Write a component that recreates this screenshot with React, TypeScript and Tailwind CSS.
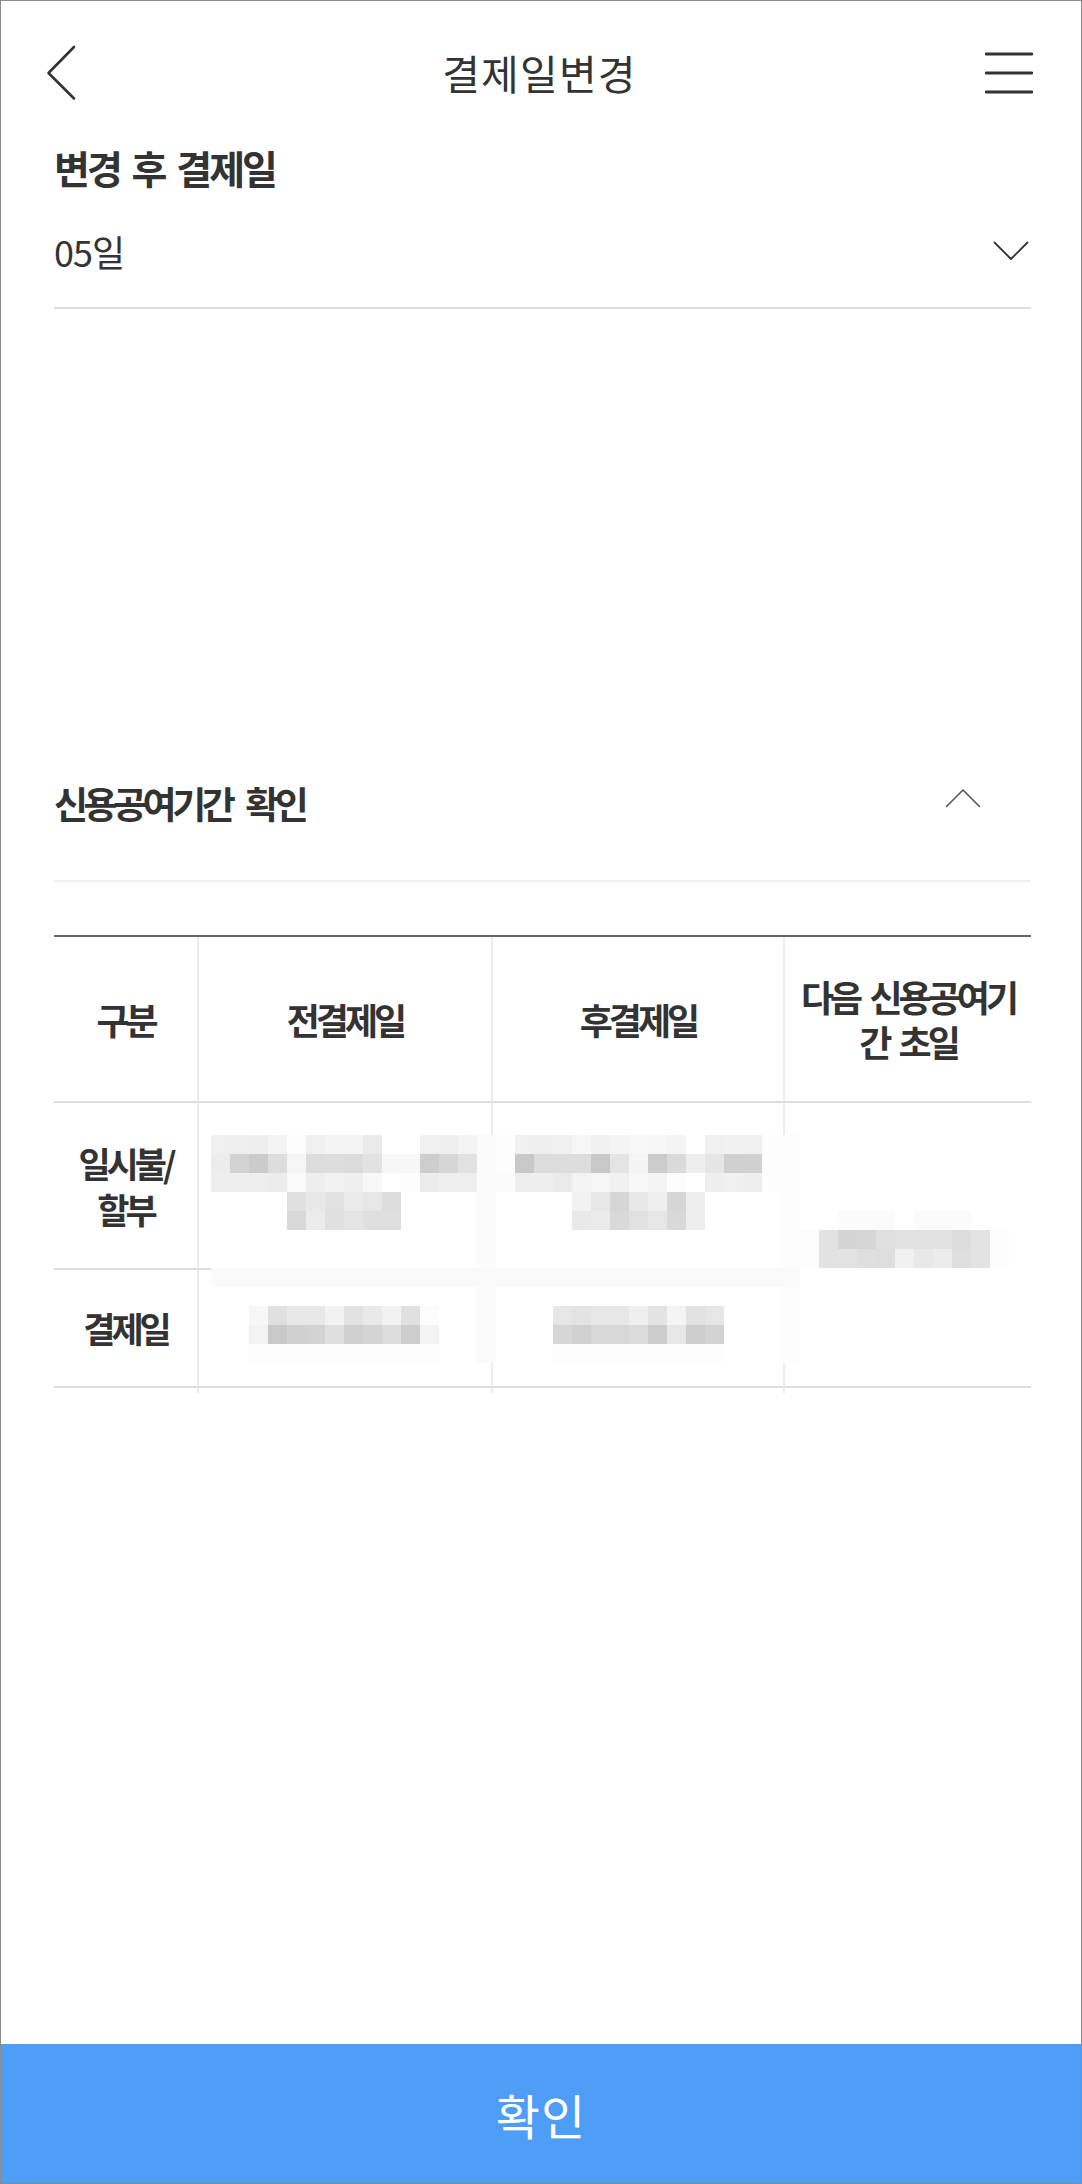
import React from "react";

const FONT = "font-['Noto_Sans_CJK_KR','Noto_Sans',sans-serif]";

const COLS = 42;
const ROWS = 12;

function buildMosaic(): number[][] {
  const g: number[][] = Array.from({ length: ROWS }, () => Array(COLS).fill(0xff));
  const put = (r: number, c: number, vals: number[]) => {
    vals.forEach((v, i) => {
      g[r][c + i] = v;
    });
  };
  // row 1 (일시불/할부) — 전결제일 / 후결제일
  put(0, 0, [0xf0, 0xef, 0xee, 0xf3, 0xfd, 0xf0, 0xf4, 0xf4, 0xea, 0xff, 0xff, 0xf0, 0xef, 0xf4, 0xfc]);
  put(0, 15, [0xfd, 0xf0, 0xef, 0xf0, 0xf6, 0xf1, 0xf3, 0xf8, 0xf7, 0xf4, 0xff, 0xf0, 0xf1, 0xf0, 0xfd]);
  put(1, 0, [0xec, 0xd2, 0xcb, 0xdd, 0xf5, 0xdc, 0xdd, 0xdb, 0xe2, 0xf7, 0xf7, 0xcd, 0xd6, 0xe2, 0xfc]);
  put(1, 15, [0xfd, 0xc8, 0xdc, 0xdd, 0xdd, 0xc8, 0xe4, 0xf4, 0xcc, 0xda, 0xee, 0xe5, 0xd0, 0xd0, 0xfd]);
  put(2, 0, [0xee, 0xee, 0xee, 0xec, 0xfa, 0xee, 0xf2, 0xef, 0xf8, 0xff, 0xfd, 0xec, 0xef, 0xef, 0xfd]);
  put(2, 15, [0xfa, 0xee, 0xee, 0xea, 0xf3, 0xf5, 0xf0, 0xf8, 0xf4, 0xfc, 0xff, 0xee, 0xf0, 0xee, 0xfd]);
  put(3, 4, [0xe0, 0xe8, 0xe1, 0xea, 0xe6, 0xdc]);
  put(3, 19, [0xf2, 0xe6, 0xd6, 0xe7, 0xef, 0xd6, 0xee]);
  put(4, 4, [0xd8, 0xeb, 0xe0, 0xe4, 0xdf, 0xdf]);
  put(4, 19, [0xe9, 0xea, 0xd9, 0xe1, 0xe6, 0xd9, 0xee]);
  // 다음 신용공여기간 초일
  put(4, 33, [0xfb, 0xfb, 0xfb, 0xff, 0xfb, 0xfb, 0xfb]);
  put(5, 31, [0xfc, 0xe2, 0xd4, 0xd6, 0xe0, 0xe2, 0xe2, 0xe2, 0xdc, 0xe3, 0xfd]);
  put(6, 31, [0xfc, 0xe2, 0xe3, 0xdf, 0xde, 0xf1, 0xe8, 0xec, 0xdf, 0xe3, 0xfd]);
  // row 2 (결제일)
  put(9, 2, [0xf7, 0xe0, 0xe8, 0xe8, 0xf2, 0xe2, 0xe9, 0xf2, 0xe0, 0xfc]);
  put(9, 18, [0xe6, 0xe3, 0xe7, 0xe7, 0xef, 0xe3, 0xf4, 0xe2, 0xe6]);
  put(10, 2, [0xf3, 0xc8, 0xd0, 0xd2, 0xdf, 0xcf, 0xd4, 0xdd, 0xcd, 0xf3]);
  put(10, 18, [0xd6, 0xd1, 0xd7, 0xd7, 0xdb, 0xcc, 0xe6, 0xcd, 0xd3]);
  put(11, 2, [0xfd, 0xfd, 0xfd, 0xfd, 0xfd, 0xfd, 0xfd, 0xfd, 0xfd, 0xfd]);
  put(11, 18, [0xfd, 0xfd, 0xfd, 0xfd, 0xfd, 0xfd, 0xfd, 0xfd, 0xfd]);
  // faint strips
  for (let c = 0; c <= 30; c++) g[7][c] = Math.min(g[7][c], 0xfa);
  for (let r = 0; r < ROWS; r++) {
    g[r][14] = Math.min(g[r][14], 0xfb);
    g[r][30] = Math.min(g[r][30], 0xfc);
  }
  return g;
}

const MOSAIC = buildMosaic();

function Mosaic() {
  return (
    <div className="absolute left-[157px] top-[198px] grid grid-cols-[repeat(42,19px)]">
      {MOSAIC.flatMap((row, r) =>
        row.map((v, c) => (
          <div
            key={`${r}-${c}`}
            className="h-[19px] w-[19px]"
            style={{ backgroundColor: `rgb(${v},${v},${v})` }}
          />
        ))
      )}
    </div>
  );
}

function BackIcon() {
  return (
    <svg width="30" height="56" viewBox="0 0 30 56" fill="none">
      <path d="M28 2 L2.5 28 L28 53.5" stroke="#333" strokeWidth="2.6" strokeLinecap="round" strokeLinejoin="round" />
    </svg>
  );
}

function MenuIcon() {
  return (
    <svg width="48" height="44" viewBox="0 0 48 44" fill="none">
      <path d="M1 3 H47 M1 22 H47 M1 41 H47" stroke="#333" strokeWidth="2.8" strokeLinecap="round" />
    </svg>
  );
}

function ChevronDown() {
  return (
    <svg width="36" height="20" viewBox="0 0 36 20" fill="none">
      <path d="M1.5 1.5 L18 18 L34.5 1.5" stroke="#333" strokeWidth="1.8" strokeLinecap="round" strokeLinejoin="round" />
    </svg>
  );
}

function ChevronUp() {
  return (
    <svg width="36" height="20" viewBox="0 0 36 20" fill="none">
      <path d="M1.5 18.5 L18 2 L34.5 18.5" stroke="#555" strokeWidth="1.6" strokeLinecap="round" strokeLinejoin="round" />
    </svg>
  );
}

const headCell =
  "flex items-center justify-center text-center text-[36px] font-bold tracking-[-4px] [word-spacing:6px] leading-[45px] text-[#333] border-b-2 border-b-[#dddddd] h-[166px]";
const vline = "border-l-2 border-l-[#ececec]";
const rowLabel =
  "flex items-center justify-center text-center text-[35px] font-bold tracking-[-4px] leading-[46px] text-[#333] border-b-2 border-b-[#dddddd]";

export default function App() {
  return (
    <div className={`${FONT} w-[1082px] h-[2184px] border border-[#8c8c8c] bg-white flex flex-col text-[#333]`}>
      {/* header */}
      <div className="h-[143px] grid grid-cols-[1fr_auto_1fr] items-center pl-[45px] pr-[48px]">
        <div className="justify-self-start flex items-center">
          <BackIcon />
        </div>
        <div className="text-[41px] leading-none tracking-[1.2px] text-[#333]">결제일변경</div>
        <div className="justify-self-end flex items-center">
          <MenuIcon />
        </div>
      </div>

      {/* 변경 후 결제일 */}
      <div className="pl-[53px] pr-[50px]">
        <div className="pt-[4px] text-[39px] leading-[39px] font-bold tracking-[-3px] [word-spacing:6px] text-[#333]">
          변경 후 결제일
        </div>
        <div className="mt-[7px] h-[115px] flex items-center justify-between border-b-2 border-b-[#dddddd]">
          <span className="text-[36px] leading-none tracking-[-1px] text-[#333]">05일</span>
          <span className="mr-[2px] flex">
            <ChevronDown />
          </span>
        </div>

        {/* 신용공여기간 확인 */}
        <div className="mt-[476px] h-[97px] flex items-start justify-between border-b-2 border-b-[#eeeeee]">
          <span className="text-[37px] leading-none font-bold tracking-[-4.5px] [word-spacing:10px] text-[#333]">
            신용공여기간 확인
          </span>
          <span className="mt-[3px] mr-[50px] flex">
            <ChevronUp />
          </span>
        </div>

        {/* table */}
        <div className="relative mt-[53px] border-t-2 border-t-[#666666]">
          <div className="grid grid-cols-[143px_294px_292px_248px]">
            <div className={headCell}>구분</div>
            <div className={`${headCell} ${vline}`}>전결제일</div>
            <div className={`${headCell} ${vline}`}>후결제일</div>
            <div className={`${headCell} ${vline}`}>
              다음 신용공여기
              <br />
              간 초일
            </div>

            <div className={`h-[167px] ${rowLabel}`}>
              일시불/
              <br />
              할부
            </div>
            <div className={`h-[167px] border-b-2 border-b-[#dddddd] ${vline}`} />
            <div className={`h-[167px] border-b-2 border-b-[#dddddd] ${vline}`} />
            <div className={`row-span-2 border-b-2 border-b-[#dddddd] ${vline}`} />

            <div className={`h-[118px] ${rowLabel}`}>결제일</div>
            <div className={`h-[118px] border-b-2 border-b-[#dddddd] ${vline}`} />
            <div className={`h-[118px] border-b-2 border-b-[#dddddd] ${vline}`} />

            <div className="h-[5px]" />
            <div className={`h-[5px] ${vline}`} />
            <div className={`h-[5px] ${vline}`} />
            <div className={`h-[5px] ${vline}`} />
          </div>
          <Mosaic />
        </div>
      </div>

      {/* confirm button */}
      <button className="mt-auto h-[139px] w-full bg-[#4e9ef7] flex items-center justify-center">
        <span className="text-[48px] leading-none tracking-[1px] text-white">확인</span>
      </button>
    </div>
  );
}
